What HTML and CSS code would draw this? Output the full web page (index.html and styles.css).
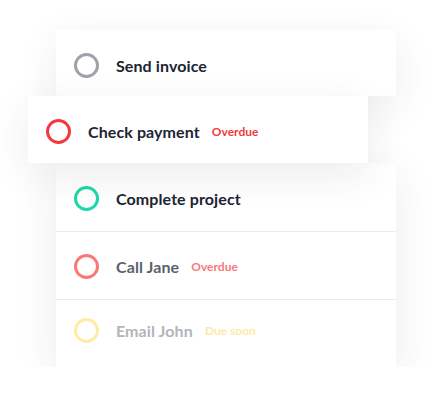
FILE: index.html
```html
<!DOCTYPE html>
<html>
<head>
<meta charset="utf-8">
<link rel="stylesheet" href="styles.css">
</head>
<body>
<div class="stage">
  <div class="card card-top">
    <span class="ring ring-gray"></span>
    <span class="title">Send invoice</span>
  </div>
  <div class="card card-mid">
    <span class="ring ring-red"></span>
    <span class="title">Check payment</span>
    <span class="tag tag-red">Overdue</span>
  </div>
  <div class="card list">
    <div class="row">
      <span class="ring ring-teal"></span>
      <span class="title">Complete project</span>
    </div>
    <div class="row row-2">
      <span class="ring ring-pink"></span>
      <span class="title">Call Jane</span>
      <span class="tag tag-pink">Overdue</span>
    </div>
    <div class="row row-3">
      <span class="ring ring-yellow"></span>
      <span class="title">Email John</span>
      <span class="tag tag-yellow">Due soon</span>
    </div>
  </div>
</div>
</body>
</html>
```
FILE: styles.css
```css
* { box-sizing: border-box; }
html, body { margin: 0; background: #fff; }
body { font-family: "Lato", "Open Sans", sans-serif; }
.stage {
  padding-top: 30px;
  display: flex;
  flex-direction: column;
}
.card {
  width: 340px;
  background: #fff;
  box-shadow: 0 12px 40px rgba(30, 40, 60, 0.09);
  position: relative;
}
.card-top {
  margin-left: 56px;
  height: 66px;
  display: flex;
  align-items: center;
  padding: 4px 0 0 18px;
  z-index: 1;
}
.card-mid {
  margin-left: 28px;
  height: 67px;
  display: flex;
  align-items: center;
  padding: 4px 0 0 18px;
  z-index: 3;
}
.list {
  margin-left: 56px;
  z-index: 2;
}
.row {
  height: 68px;
  display: flex;
  align-items: center;
  padding: 2px 0 0 18px;
  border-top: 1px solid #e9eaec;
}
.row:first-child { border-top: none; }
.row-3 { padding: 0 0 6px 18px; }
.ring {
  width: 25px;
  height: 25px;
  border-radius: 50%;
  border: 3px solid #9ea3ab;
  flex: none;
  margin-right: 17px;
}
.ring-gray { border-color: #9ea3ab; }
.ring-red { border-color: #f2393d; }
.ring-teal { border-color: #1ad9ab; }
.ring-pink { border-color: #fb7876; }
.ring-yellow { border-color: #fdeba6; }
.title {
  font-size: 16px;
  font-weight: 700;
  color: #1d2433;
  letter-spacing: 0.1px;
}
.row-2 .title { color: #5b626e; }
.row-3 .title { color: #b3b5ba; }
.tag {
  font-size: 12px;
  font-weight: 700;
  margin-left: 12px;
}
.tag-red { color: #f2393d; }
.tag-pink { color: #f87977; }
.tag-yellow { color: #fdeaa4; }
```
